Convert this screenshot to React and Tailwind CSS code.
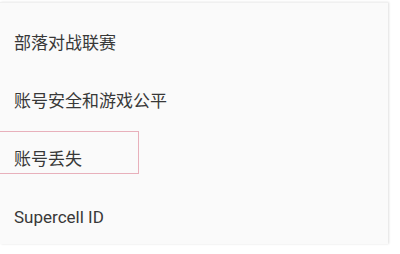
export default function App() {
  const items = ["部落对战联赛", "账号安全和游戏公平", "账号丢失", "Supercell ID"];
  return (
    <div className="w-[400px] h-[254px] bg-white overflow-hidden relative" style={{ fontFamily: 'Roboto, "Noto Sans CJK SC", sans-serif' }}>
      <div className="mt-[2px] w-[388px] h-[242px] bg-[#fafafa] border-t border-[#f0f0f0] shadow-[1px_0_2px_rgba(0,0,0,0.12)] flex flex-col pt-[12px] overflow-hidden">
        {items.map((t) => (
          <div key={t} className="h-[58px] shrink-0 flex items-center pl-[14px] text-[17px] text-[#383838]">
            {t}
          </div>
        ))}
      </div>
      <div className="absolute left-[-2px] top-[131px] w-[141px] h-[43px] border border-[#e8b0bb]"></div>
    </div>
  );
}
